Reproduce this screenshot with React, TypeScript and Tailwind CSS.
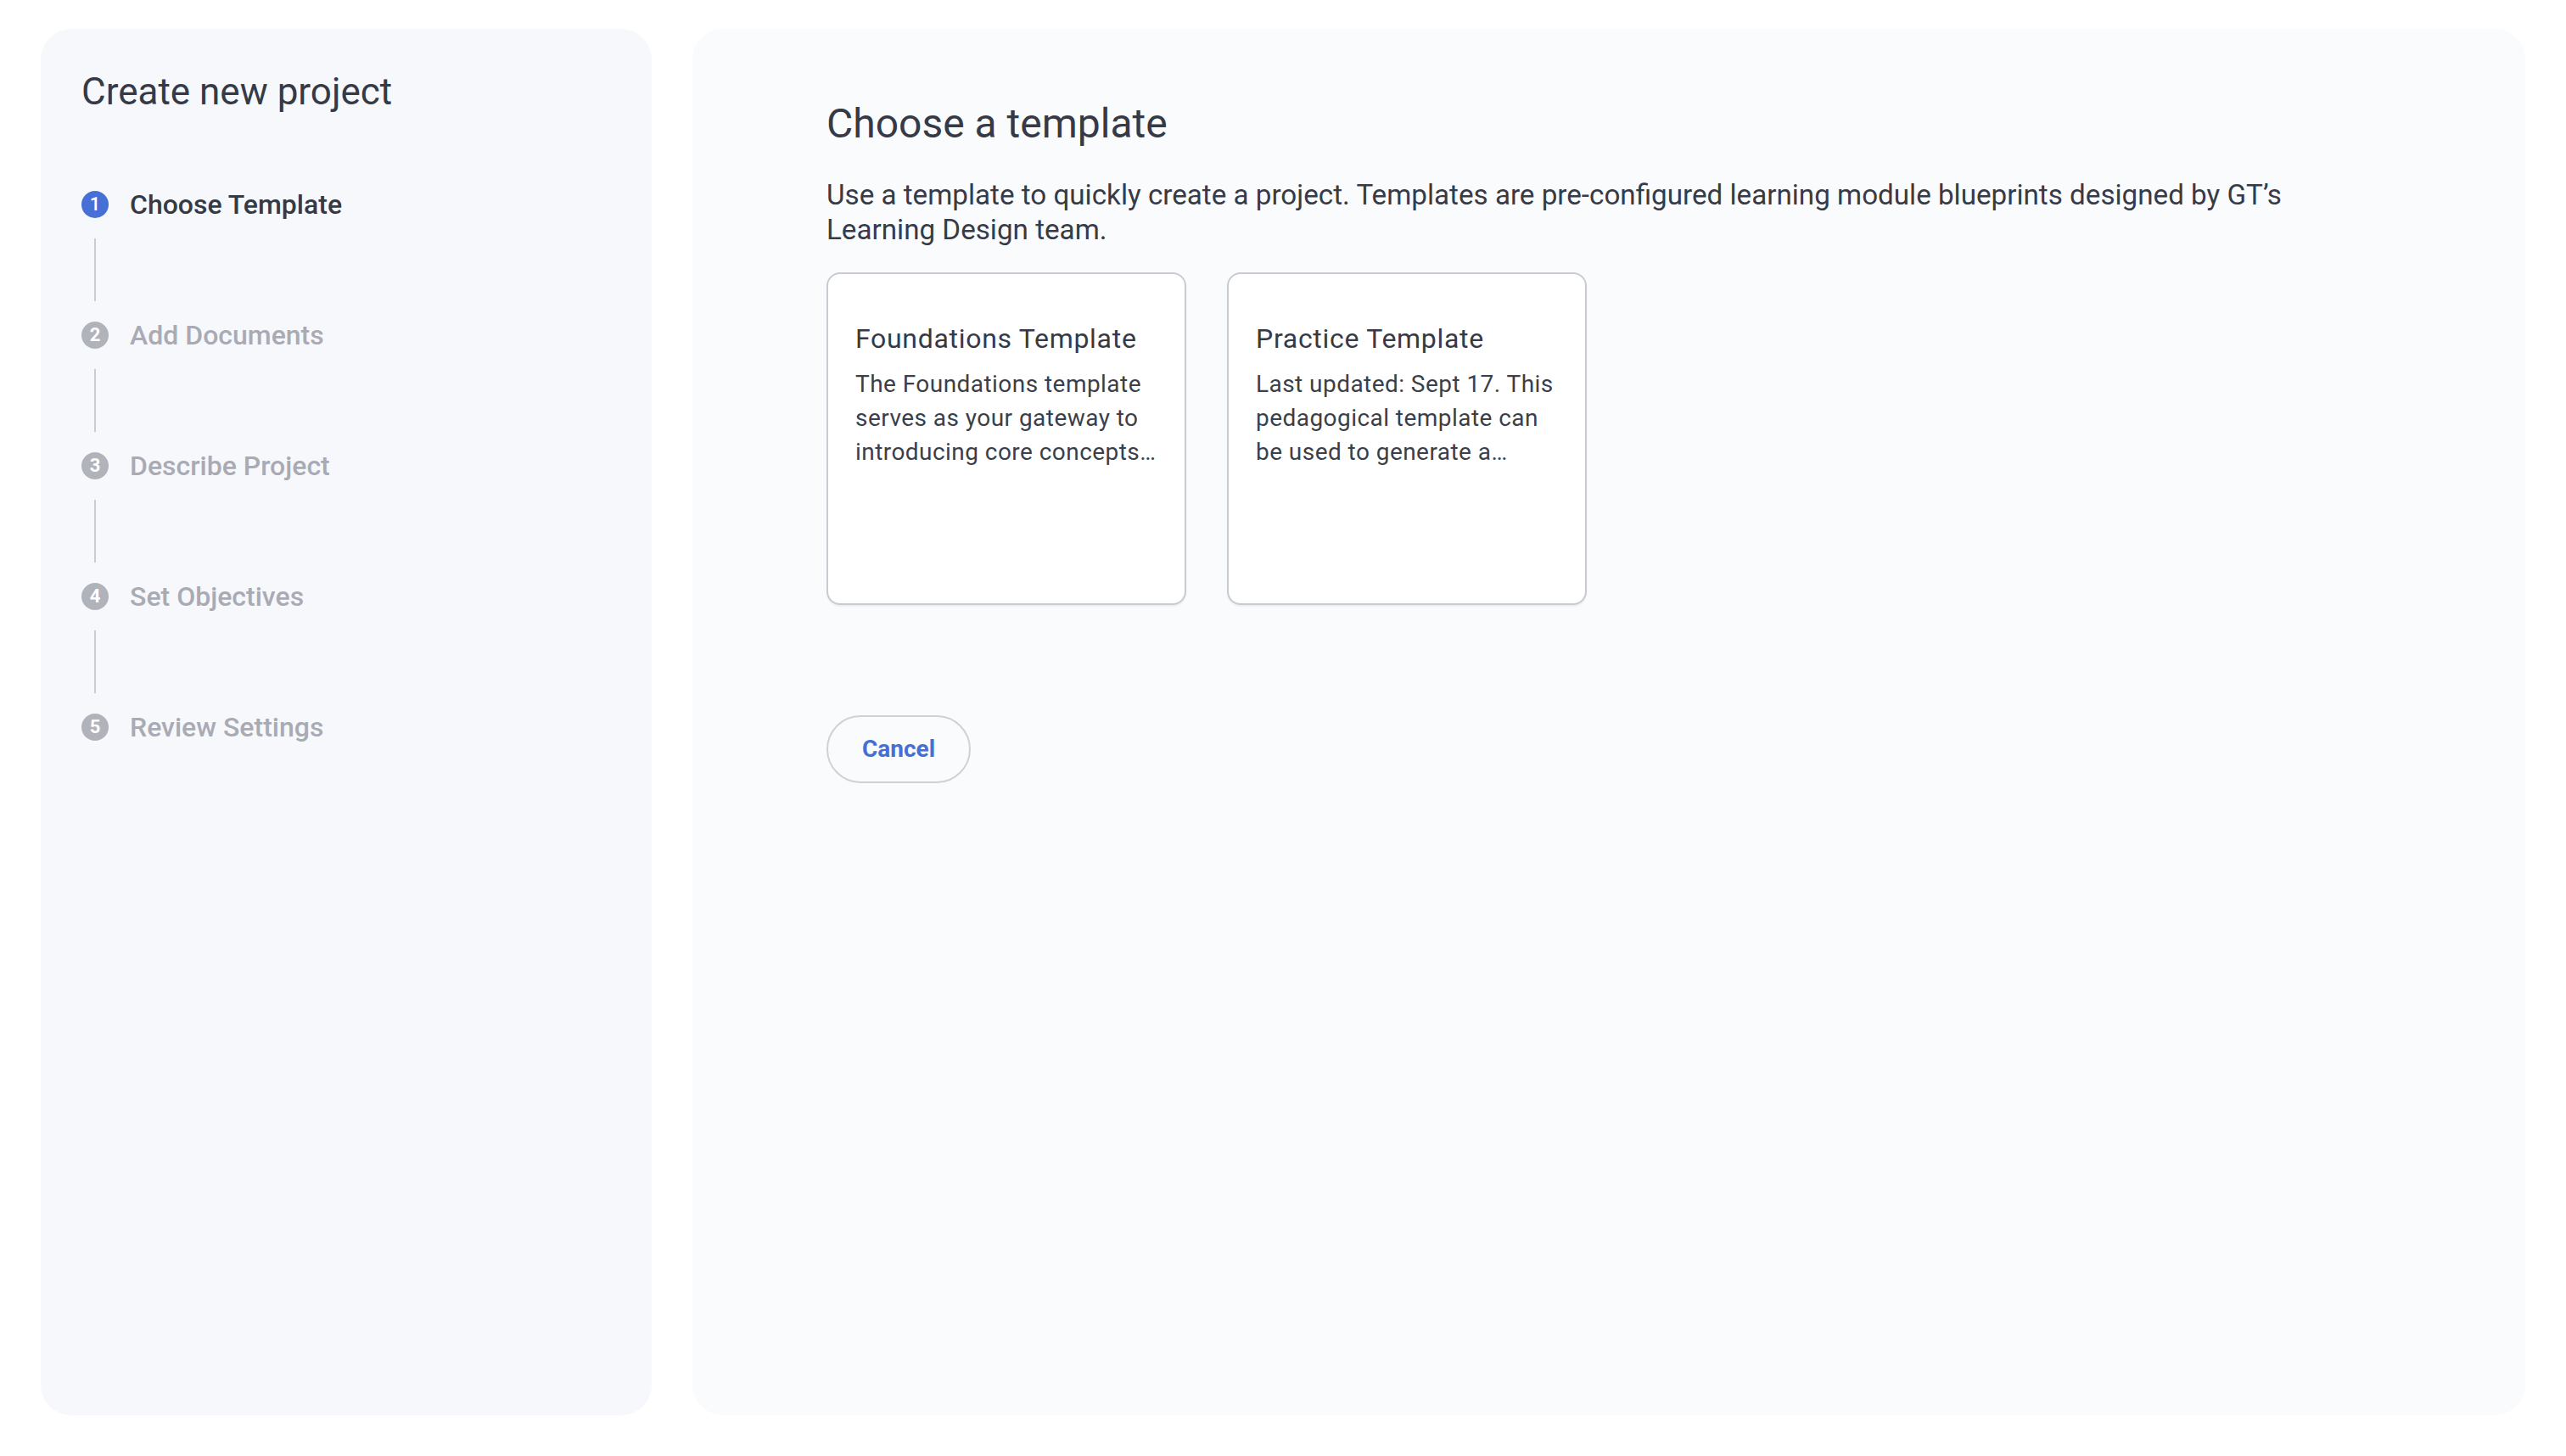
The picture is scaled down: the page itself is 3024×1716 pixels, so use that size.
import React from "react";

const steps = [
  "Choose Template",
  "Add Documents",
  "Describe Project",
  "Set Objectives",
  "Review Settings",
];

const templates = [
  {
    title: "Foundations Template",
    desc: "The Foundations template serves as your gateway to introducing core concepts and building essential knowledge for learners who are new to the subject.",
  },
  {
    title: "Practice Template",
    desc: "Last updated: Sept 17. This pedagogical template can be used to generate a series of practice activities that reinforce learning.",
  },
];

export default function App() {
  return (
    <div
      className="flex h-screen w-full gap-[48px] bg-white px-[48px] pt-[34px] pb-[48px]"
      style={{ fontFamily: "Roboto, 'Noto Sans', sans-serif" }}
    >
      {/* Left sidebar */}
      <aside className="flex w-[720px] shrink-0 flex-col rounded-[36px] bg-[#f7f8fc] p-[48px]">
        <h1 className="text-[44px] leading-[52px] font-normal text-[#353a46]">
          Create new project
        </h1>
        <div className="mt-[87px] flex flex-col">
          {steps.map((s, i) => {
            const active = i === 0;
            return (
              <React.Fragment key={s}>
                <div className="flex h-[40px] items-center gap-[25px]">
                  <div
                    className={
                      active
                        ? "flex h-[32px] w-[32px] items-center justify-center rounded-full bg-[#4670d6] text-[22px] leading-none font-medium text-white"
                        : "flex h-[32px] w-[32px] items-center justify-center rounded-full bg-[#b1b3bb] text-[22px] leading-none font-bold text-white"
                    }
                  >
                    {i + 1}
                  </div>
                  <span
                    className={
                      active
                        ? "text-[32px] leading-[40px] font-medium text-[#343a46]"
                        : "text-[32px] leading-[40px] font-medium text-[#a9abb4]"
                    }
                  >
                    {s}
                  </span>
                </div>
                {i < steps.length - 1 && (
                  <div className="my-[20px] ml-[15px] h-[74px] w-[2px] bg-[#cbccd2]" />
                )}
              </React.Fragment>
            );
          })}
        </div>
      </aside>

      {/* Main content */}
      <main className="flex flex-1 flex-col rounded-[36px] bg-[#fafbfd] pt-[84px] pl-[158px] pr-[160px]">
        <h2 className="text-[48px] leading-[56px] font-normal text-[#353a46]">
          Choose a template
        </h2>
        <p className="mt-[35px] max-w-[1790px] text-[33.2px] leading-[41px] text-[#363b47]">
          Use a template to quickly create a project. Templates are pre-configured learning module blueprints designed by GT’s Learning Design team.
        </p>
        <div className="mt-[30px] flex gap-[48px]">
          {templates.map((t) => (
            <div
              key={t.title}
              className="h-[392px] w-[424px] rounded-[16px] border-[2px] border-[#c9cbd3] bg-white px-[32px] pt-[52px] shadow-[0_2px_2px_rgba(0,0,0,0.06)]"
            >
              <div className="text-[32px] leading-[48px] tracking-[0.7px] text-[#353a46]">
                {t.title}
              </div>
              <p className="mt-[10px] line-clamp-3 text-[28px] leading-[40px] tracking-[0.45px] text-[#3a3f4a]">
                {t.desc}
              </p>
            </div>
          ))}
        </div>
        <div className="mt-[130px]">
          <button className="flex h-[80px] items-center justify-center rounded-full border-[2px] border-[#cfd1d8] bg-transparent px-[40px] text-[28px] font-bold text-[#4470d4]">
            Cancel
          </button>
        </div>
      </main>
    </div>
  );
}
